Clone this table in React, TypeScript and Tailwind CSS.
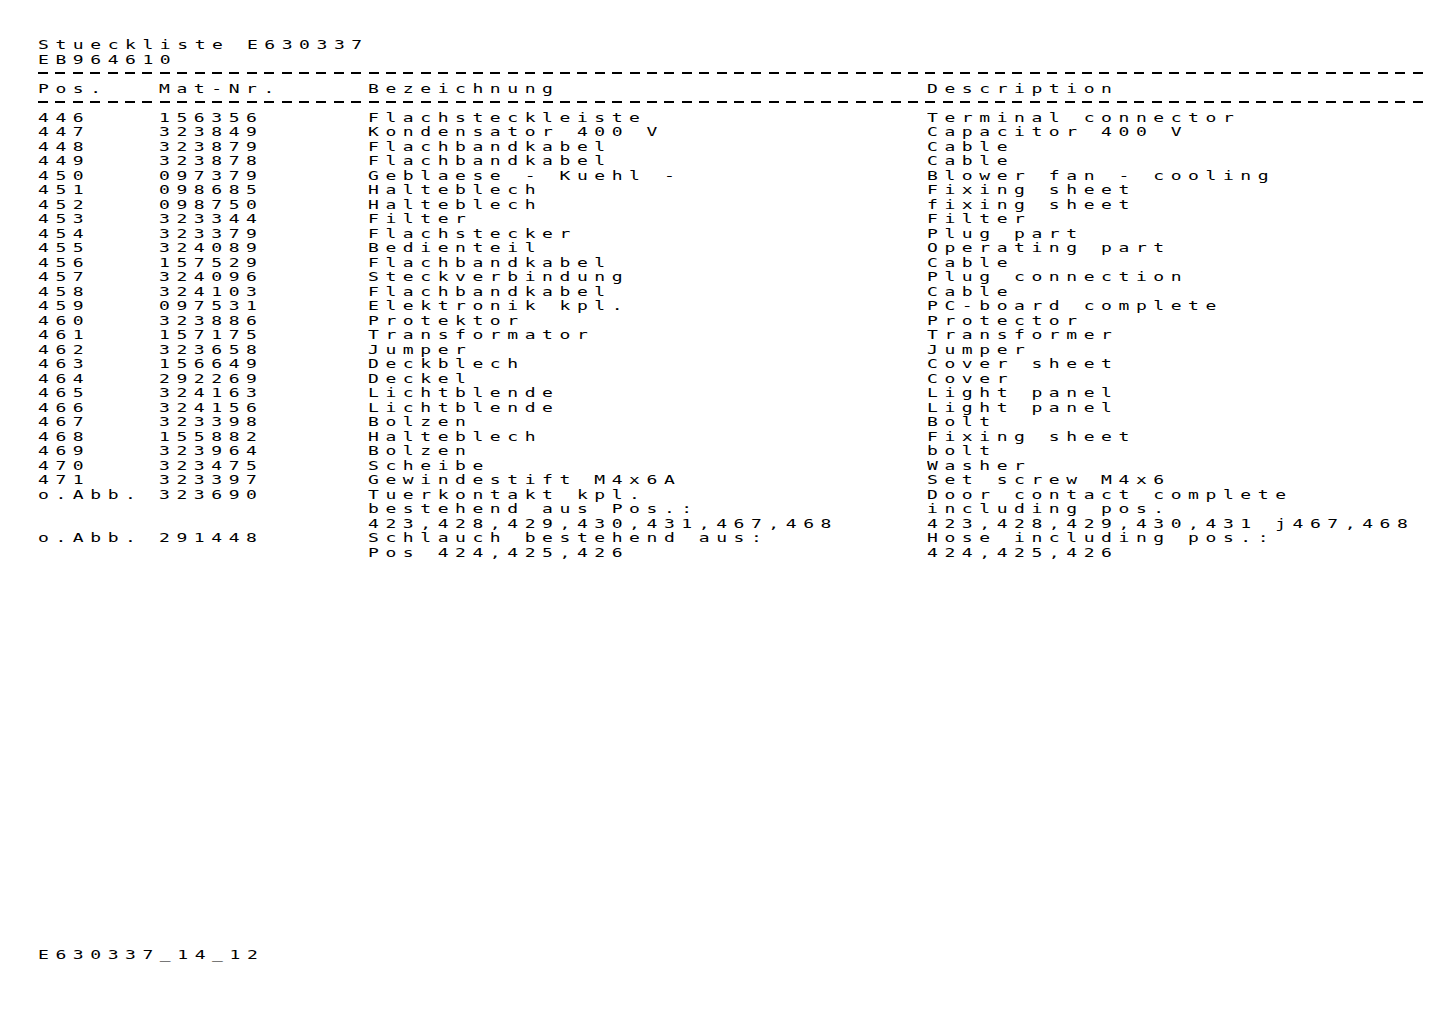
const rows: [string, string, string, string][] = [
  ["446", "156356", "Flachsteckleiste", "Terminal connector"],
  ["447", "323849", "Kondensator 400 V", "Capacitor 400 V"],
  ["448", "323879", "Flachbandkabel", "Cable"],
  ["449", "323878", "Flachbandkabel", "Cable"],
  ["450", "097379", "Geblaese - Kuehl -", "Blower fan - cooling"],
  ["451", "098685", "Halteblech", "Fixing sheet"],
  ["452", "098750", "Halteblech", "fixing sheet"],
  ["453", "323344", "Filter", "Filter"],
  ["454", "323379", "Flachstecker", "Plug part"],
  ["455", "324089", "Bedienteil", "Operating part"],
  ["456", "157529", "Flachbandkabel", "Cable"],
  ["457", "324096", "Steckverbindung", "Plug connection"],
  ["458", "324103", "Flachbandkabel", "Cable"],
  ["459", "097531", "Elektronik kpl.", "PC-board complete"],
  ["460", "323886", "Protektor", "Protector"],
  ["461", "157175", "Transformator", "Transformer"],
  ["462", "323658", "Jumper", "Jumper"],
  ["463", "156649", "Deckblech", "Cover sheet"],
  ["464", "292269", "Deckel", "Cover"],
  ["465", "324163", "Lichtblende", "Light panel"],
  ["466", "324156", "Lichtblende", "Light panel"],
  ["467", "323398", "Bolzen", "Bolt"],
  ["468", "155882", "Halteblech", "Fixing sheet"],
  ["469", "323964", "Bolzen", "bolt"],
  ["470", "323475", "Scheibe", "Washer"],
  ["471", "323397", "Gewindestift M4x6A", "Set screw M4x6"],
  ["o.Abb.", "323690", "Tuerkontakt kpl.", "Door contact complete"],
  ["", "", "bestehend aus Pos.:", "including pos."],
  ["", "", "423,428,429,430,431,467,468", "423,428,429,430,431 j467,468"],
  ["o.Abb.", "291448", "Schlauch bestehend aus:", "Hose including pos.:"],
  ["", "", "Pos 424,425,426", "424,425,426"],
];

// plotter text: mono glyphs stretched wide, 17.4px pitch
function Txt({ children }: { children: string }) {
  return (
    <div className="w-fit origin-left scale-x-[1.5] whitespace-pre tracking-[4.38px]">
      {children}
    </div>
  );
}

function Dashes() {
  return (
    <div className="h-[14.5px] w-[1392px] pt-[5px]">
      <div className="h-[1.5px] bg-[repeating-linear-gradient(90deg,#000_0_10px,transparent_10px_17.4px)]" />
    </div>
  );
}

function Row({ cols }: { cols: string[] }) {
  return (
    <div className="flex h-[14.5px]">
      <div className="w-[121px] shrink-0">
        <Txt>{cols[0]}</Txt>
      </div>
      <div className="w-[209px] shrink-0">
        <Txt>{cols[1]}</Txt>
      </div>
      <div className="w-[559px] shrink-0">
        <Txt>{cols[2]}</Txt>
      </div>
      <div className="min-w-0 flex-1">
        <Txt>{cols[3]}</Txt>
      </div>
    </div>
  );
}

export default function App() {
  return (
    <div className="min-h-[1019px] w-[1442px] overflow-hidden bg-white pl-[38px] pt-[38px] font-['DejaVu_Sans_Mono',monospace] text-[12px] leading-[14.5px] text-black">
      <div className="h-[14.5px]">
        <Txt>Stueckliste E630337</Txt>
      </div>
      <div className="h-[14.5px]">
        <Txt>EB964610</Txt>
      </div>
      <Dashes />
      <Row cols={["Pos.", "Mat-Nr.", "Bezeichnung", "Description"]} />
      <Dashes />
      {rows.map((r, i) => (
        <Row key={i} cols={r} />
      ))}
      <div className="mt-[388px] h-[14.5px]">
        <Txt>E630337_14_12</Txt>
      </div>
    </div>
  );
}
